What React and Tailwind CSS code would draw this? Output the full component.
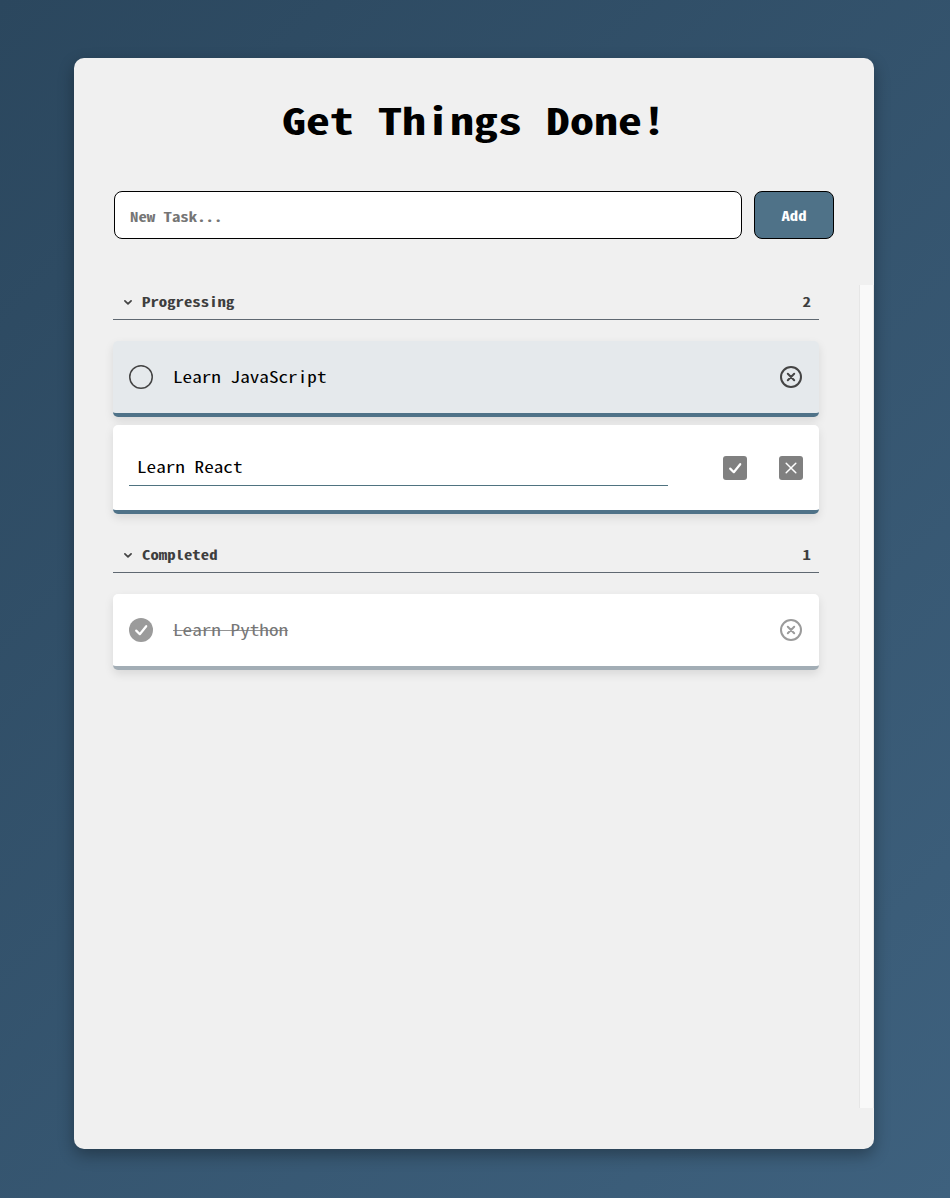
const mono = "font-['Noto_Sans_CJK_JP','Liberation_Mono',monospace] [font-feature-settings:'hwid'] whitespace-pre";

function Chevron() {
  return (
    <svg className="h-3 w-3" viewBox="0 0 12 12" fill="none" stroke="#444" strokeWidth="1.7" strokeLinecap="round" strokeLinejoin="round">
      <path d="M2.9 4.8 6 7.9 9.1 4.8" />
    </svg>
  );
}

function Remove({ color }) {
  return (
    <svg className="h-6 w-6" viewBox="0 0 24 24" fill="none" stroke={color} strokeWidth="2" strokeLinecap="round">
      <circle cx="12" cy="12" r="10" />
      <path d="M8.8 8.8 15.2 15.2M15.2 8.8 8.8 15.2" />
    </svg>
  );
}

function SectionHeader({ title, count }) {
  return (
    <div className="flex h-[35px] items-center border-b border-[#5f6871] pr-2 pl-[9px] text-[#3e3e3e]">
      <Chevron />
      <span className="ml-2 flex-1 scale-y-[0.77] text-[16.8px] leading-5 font-bold">{title}</span>
      <span className="scale-y-[0.77] text-[16.8px] leading-5 font-bold">{count}</span>
    </div>
  );
}

const shadow = "shadow-[0_4px_10px_rgba(0,0,0,0.1)]";

export default function App() {
  return (
    <div className={`h-[1198px] w-[950px] bg-[linear-gradient(135deg,#2b475e,#3e617e)] pt-[58px] pl-[74px] ${mono}`}>
      <main className="flex h-[1091px] w-[800px] flex-col rounded-[10px] bg-[#f0f0f0] shadow-[0_6px_16px_rgba(0,0,0,0.32)]">
        <h1 className="mt-[37px] scale-y-[0.76] text-center text-[48px] leading-[48px] font-bold text-black">Get Things Done!</h1>
        <form className="mt-12 flex gap-3 px-10" onSubmit={(e) => e.preventDefault()}>
          <div className="flex h-12 w-[628px] items-center rounded-lg border border-black bg-white px-[15px] pt-1">
            <input
              className="w-full scale-y-[0.77] text-[16.8px] font-bold outline-none placeholder:text-[#757575]"
              placeholder="New Task..."
            />
          </div>
          <button className="h-12 w-20 rounded-lg border border-black bg-[#4f7288] pt-0.5 text-[16.8px] font-bold text-white">
            <span className="inline-block scale-y-[0.77]">Add</span>
          </button>
        </form>
        <div className="mt-[46px] flex h-[823px] justify-between">
          <div className="ml-[39px] w-[706px]">
            <SectionHeader title="Progressing" count="2" />
            <div className={`mt-[21px] flex h-[76px] items-center rounded-[5px] border-b-4 border-[#4f7288] bg-[#e5e9ec] px-4 ${shadow}`}>
              <svg className="h-6 w-6" viewBox="0 0 24 24" fill="none" stroke="#444" strokeWidth="1.5">
                <circle cx="12" cy="12" r="11.25" />
              </svg>
              <span className="ml-5 flex-1 scale-y-[0.79] text-[19.2px] leading-6 text-black">Learn JavaScript</span>
              <Remove color="#444" />
            </div>
            <div className={`mt-2 flex h-[89px] items-center rounded-[5px] border-b-4 border-[#4f7288] bg-white px-4 ${shadow}`}>
              <div className="flex h-9 w-[539px] items-center border-b border-[#4f7380] pl-2">
                <input className="w-full scale-y-[0.79] text-[19.2px] text-black outline-none" defaultValue="Learn React" />
              </div>
              <svg className="ml-[55px] h-6 w-6" viewBox="0 0 24 24" fill="none">
                <rect width="24" height="24" rx="3" fill="#808080" />
                <path d="M7.2 12.6 10.8 16.2 17.2 8.2" stroke="#fff" strokeWidth="2.2" strokeLinecap="round" strokeLinejoin="round" />
              </svg>
              <svg className="ml-8 h-6 w-6" viewBox="0 0 24 24" fill="none">
                <rect width="24" height="24" rx="3" fill="#808080" />
                <path d="M7.2 7.2 16.8 16.8M16.8 7.2 7.2 16.8" stroke="#fff" strokeWidth="1.5" strokeLinecap="round" />
              </svg>
            </div>
            <div className="mt-6">
              <SectionHeader title="Completed" count="1" />
            </div>
            <div className={`mt-[21px] flex h-[76px] items-center rounded-[5px] border-b-4 border-[#a2adb5] bg-white px-4 ${shadow}`}>
              <svg className="h-6 w-6" viewBox="0 0 24 24" fill="none">
                <circle cx="12" cy="12" r="12" fill="#9b9b9b" />
                <path d="M7.2 12.6 10.8 16.2 17.2 8.2" stroke="#fff" strokeWidth="2.2" strokeLinecap="round" strokeLinejoin="round" />
              </svg>
              <span className="ml-5 scale-y-[0.79] text-[19.2px] leading-6 text-[#777] line-through">Learn Python</span>
              <span className="ml-auto"><Remove color="#9b9b9b" /></span>
            </div>
          </div>
          <div className="w-[15px] border-x border-[#e6e6e6] bg-[#f9f9f9]" />
        </div>
      </main>
    </div>
  );
}
